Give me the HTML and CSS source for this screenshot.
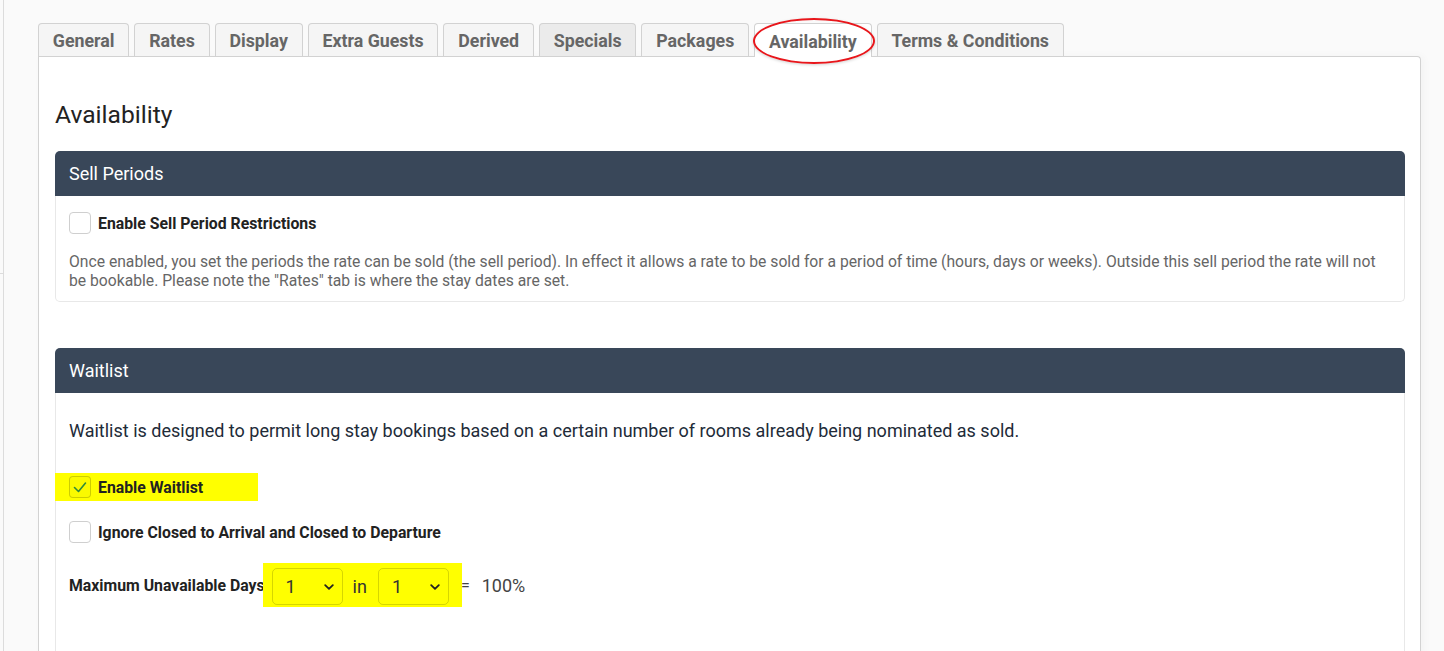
FILE: index.html
```html
<!DOCTYPE html>
<html lang="en">
<head>
<meta charset="utf-8">
<title>Availability</title>
<link rel="stylesheet" href="styles.css">
</head>
<body>
<div class="page">
  <div class="sidebar-edge"><div class="sidebar-top"></div></div>
  <main class="main">
    <nav class="tabs">
      <span class="tab">General</span>
      <span class="tab">Rates</span>
      <span class="tab">Display</span>
      <span class="tab">Extra Guests</span>
      <span class="tab">Derived</span>
      <span class="tab tab-hover">Specials</span>
      <span class="tab">Packages</span>
      <span class="tab tab-active">Availability<span class="annotation-ring"></span></span>
      <span class="tab">Terms &amp; Conditions</span>
    </nav>
    <section class="panel">
      <h2 class="panel-title">Availability</h2>

      <div class="card">
        <div class="card-header">Sell Periods</div>
        <div class="card-body sell-body">
          <label class="check-row">
            <span class="checkbox"></span>
            <span class="check-label">Enable Sell Period Restrictions</span>
          </label>
          <p class="help">Once enabled, you set the periods the rate can be sold (the sell period). In effect it allows a rate to be sold for a period of time (hours, days or weeks). Outside this sell period the rate will not be bookable. Please note the "Rates" tab is where the stay dates are set.</p>
        </div>
      </div>

      <div class="card card-waitlist">
        <div class="card-header">Waitlist</div>
        <div class="card-body wait-body">
          <p class="lead">Waitlist is designed to permit long stay bookings based on a certain number of rooms already being nominated as sold.</p>
          <div class="highlight-row">
            <label class="check-row">
              <span class="checkbox checked">
                <svg viewBox="0 0 22 22" width="22" height="22"><path d="M5.5 11.5 L9.5 15.5 L16.5 7" fill="none" stroke="#2f8a3a" stroke-width="1.6" stroke-linecap="round" stroke-linejoin="round"/></svg>
              </span>
              <span class="check-label">Enable Waitlist</span>
            </label>
          </div>
          <label class="check-row ignore-row">
            <span class="checkbox"></span>
            <span class="check-label">Ignore Closed to Arrival and Closed to Departure</span>
          </label>
          <div class="max-row">
            <span class="check-label">Maximum Unavailable Days</span>
            <span class="highlight-selects">
              <span class="select-wrap">
                <select class="select"><option>1</option></select>
                <svg class="chev" viewBox="0 0 10 6" width="10" height="6"><path d="M1.2 1.2 L5 4.8 L8.8 1.2" fill="none" stroke="#222" stroke-width="1.8" stroke-linecap="round" stroke-linejoin="round"/></svg>
              </span>
              <span class="in-text">in</span>
              <span class="select-wrap">
                <select class="select"><option>1</option></select>
                <svg class="chev" viewBox="0 0 10 6" width="10" height="6"><path d="M1.2 1.2 L5 4.8 L8.8 1.2" fill="none" stroke="#222" stroke-width="1.8" stroke-linecap="round" stroke-linejoin="round"/></svg>
              </span>
            </span>
            <span class="equals">=</span>
            <span class="percent">100%</span>
          </div>
        </div>
      </div>
    </section>
  </main>
</div>
</body>
</html>
```

FILE: styles.css
```css
* { box-sizing: border-box; }
html, body { margin: 0; padding: 0; }
body {
  background: #fafafa;
  font-family: Roboto, "Liberation Sans", Arial, sans-serif;
  color: #222;
  height: 651px;
  overflow: hidden;
}
.page {
  display: flex;
  height: 651px;
}
.sidebar-edge {
  width: 4px;
  flex: 0 0 4px;
  border-right: 1px solid #dcdcdc;
}
.sidebar-top {
  height: 274px;
  border-bottom: 1px solid #dcdcdc;
}
.main {
  flex: 1;
  padding: 23px 23px 0 34px;
}
.tabs {
  display: flex;
  gap: 5px;
  align-items: flex-end;
}
.tab {
  position: relative;
  height: 33px;
  padding: 0 13.8px;
  line-height: 33px;
  font-size: 17.8px;
  font-weight: 700;
  color: #666;
  background: #f5f5f5;
  border: 1px solid #d2d2d2;
  border-bottom: 0;
  border-radius: 4px 4px 0 0;
  white-space: nowrap;
}
.tab-hover { background: #ebebeb; }
.tab-active {
  background: #fff;
  height: 34px;
  line-height: 36px;
  margin-bottom: -1px;
  z-index: 1;
}
.annotation-ring {
  position: absolute;
  left: -2px;
  top: -6px;
  width: 122px;
  height: 46px;
  border: 2px solid #e8161b;
  border-radius: 50%;
  box-shadow: 0 1px 3px rgba(0,0,0,0.18);
  pointer-events: none;
}
.panel {
  background: #fff;
  border: 1px solid #d2d2d2;
  border-bottom: 0;
  border-radius: 0 4px 0 0;
  padding: 43px 15px 0 16px;
  height: 600px;
  box-shadow: 3px 0 8px rgba(0,0,0,0.03);
}
.panel-title {
  margin: 0 0 22px;
  font-size: 24.6px;
  font-weight: 400;
  line-height: 29px;
  color: #222;
}
.card {
  border-radius: 5px;
}
.card-header {
  background: #394759;
  color: #fff;
  font-size: 18px;
  height: 45px;
  line-height: 45px;
  padding: 0 14px;
  border-radius: 5px 5px 0 0;
}
.card-body {
  border: 1px solid #e8e8e8;
  border-top: 0;
  border-radius: 0 0 5px 5px;
  padding: 0 13px;
}
.sell-body {
  padding-top: 16px;
  padding-bottom: 11px;
}
.check-row {
  display: flex;
  align-items: center;
  gap: 7px;
}
.checkbox {
  width: 22px;
  height: 22px;
  border: 1px solid #cfcfcf;
  border-radius: 4px;
  background: #fff;
  flex: 0 0 22px;
  display: flex;
}
.checkbox svg { margin: -1px; }
.checkbox.checked {
  background: rgba(0,0,0,0.02);
  border-color: rgba(0,0,0,0.18);
}
.check-label {
  font-size: 15.8px;
  font-weight: 700;
  color: #222;
}
.help {
  margin: 18px 0 0;
  font-size: 15.7px;
  line-height: 19px;
  color: #666;
}
.card-waitlist {
  margin-top: 46px;
}
.wait-body {
  height: 320px;
  border-radius: 0;
  padding-top: 27px;
}
.lead {
  margin: 0;
  font-size: 18px;
  line-height: 22px;
  color: #222b38;
}
.highlight-row {
  background: #ffff00;
  width: 203px;
  margin: 31px 0 0 -14px;
  padding: 3px 14px;
  height: 28px;
}
.ignore-row {
  margin-top: 20px;
}
.max-row {
  display: flex;
  align-items: center;
  margin-top: 20px;
}
.highlight-selects {
  display: flex;
  align-items: center;
  background: #ffff00;
  margin-left: -2px;
  padding: 5px 13px 2px 9px;
  height: 44px;
}
.select-wrap {
  position: relative;
  display: block;
}
.select {
  appearance: none;
  -webkit-appearance: none;
  display: block;
  width: 71px;
  height: 37px;
  border: 1px solid rgba(0,0,0,0.16);
  border-radius: 5px;
  background: transparent;
  font-family: Roboto, "Liberation Sans", Arial, sans-serif;
  font-size: 18px;
  color: #333;
  padding: 0 0 0 13px;
  margin: 0;
}
.chev {
  position: absolute;
  right: 9px;
  top: 16px;
  pointer-events: none;
}
.in-text {
  font-size: 18px;
  color: #333;
  margin: 0 11px 0 10px;
}
.equals {
  font-size: 16px;
  color: #444;
  margin-left: -1px;
}
.percent {
  font-size: 18px;
  color: #444;
  margin-left: 12px;
}
```
